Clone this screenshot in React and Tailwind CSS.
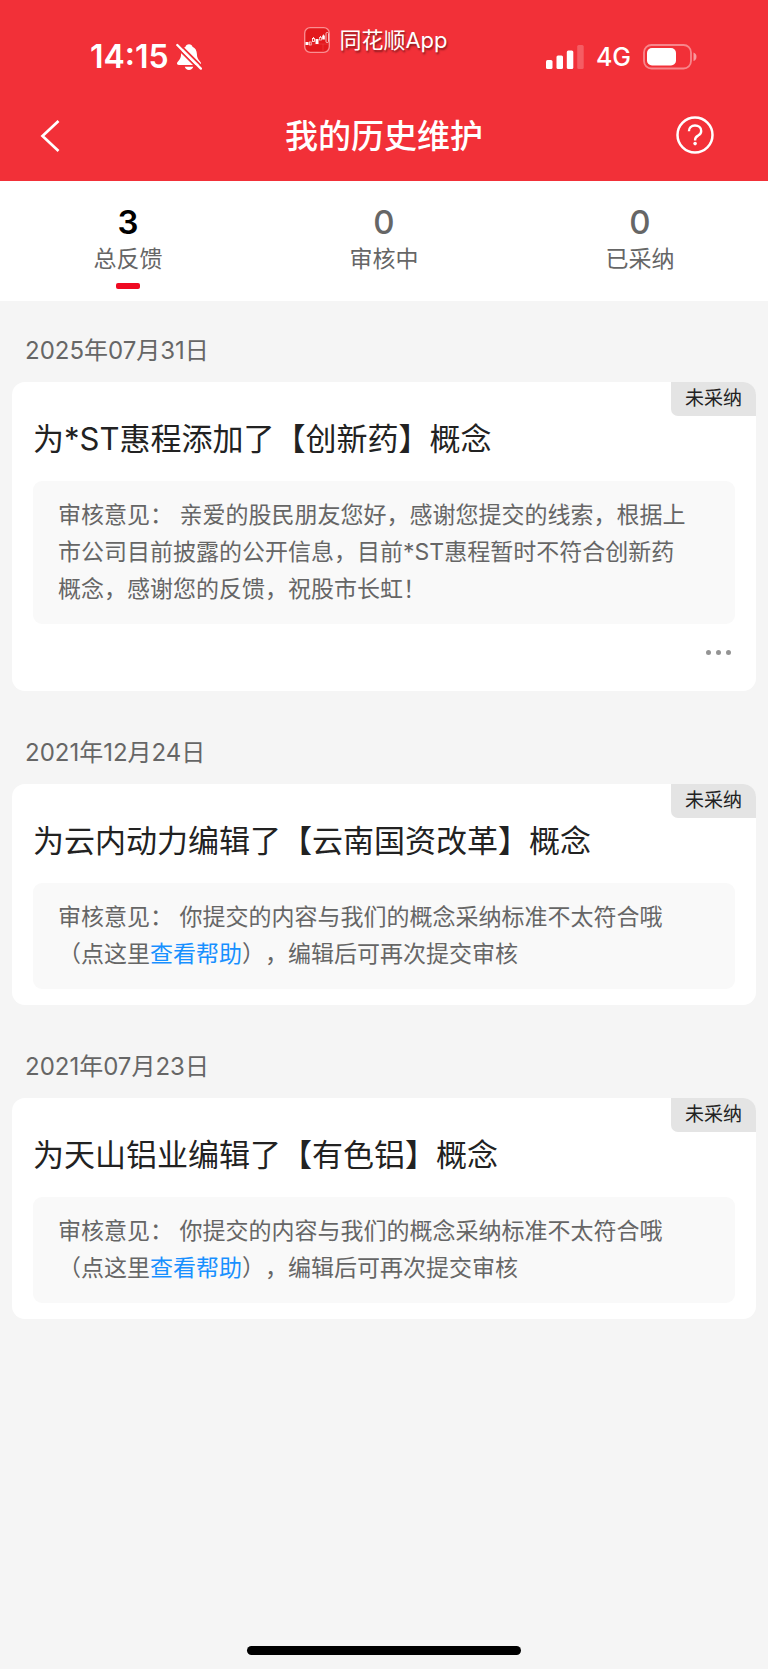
import React from "react";

const tabs = [
  { count: 3, label: "总反馈", active: true },
  { count: 0, label: "审核中", active: false },
  { count: 0, label: "已采纳", active: false },
];

const helpReply = (
  <>
    审核意见： 你提交的内容与我们的概念采纳标准不太符合哦
    <span className="block">
      （点这里
      <a href="#help" className="text-[#1890ff]">查看帮助</a>
      ），编辑后可再次提交审核
    </span>
  </>
);

const records = [
  {
    date: "2025年07月31日",
    title: "为*ST惠程添加了【创新药】概念",
    reply:
      "审核意见： 亲爱的股民朋友您好，感谢您提交的线索，根据上市公司目前披露的公开信息，目前*ST惠程暂时不符合创新药概念，感谢您的反馈，祝股市长虹！",
    more: true,
  },
  { date: "2021年12月24日", title: "为云内动力编辑了【云南国资改革】概念", reply: helpReply },
  { date: "2021年07月23日", title: "为天山铝业编辑了【有色铝】概念", reply: helpReply },
];

function BellOff() {
  return (
    <svg width="26" height="28" viewBox="0 0 26 28" fill="none" aria-hidden="true">
      <path
        d="M13 1.2c-1.900 0-3.200 1.100-3.500 2.500C6.600 4.900 5.200 7.600 5.100 11c-.1 3.600-.9 5.100-2.700 6.900-.9.900-1.400 1.700-1.400 2.400 0 1 .7 1.600 1.900 1.600h20.200c1.200 0 1.900-.6 1.900-1.600 0-.7-.5-1.500-1.400-2.400-1.800-1.800-2.600-3.300-2.700-6.900-.1-3.400-1.500-6.100-4.400-7.300C16.200 2.300 14.900 1.200 13 1.200Z"
        fill="#fff"
      />
      <path d="M8.800 23.700h8.400c-.4 1.900-2 3.200-4.200 3.200s-3.800-1.300-4.200-3.200Z" fill="#fff" />
      <path d="M-.2 3.500 23.400 27.100M2.800 .5 26.400 24.100" stroke="#f23038" strokeWidth="1.900" />
      <path d="M1.300 2 24.900 25.600" stroke="#fff" strokeWidth="2.300" strokeLinecap="round" />
    </svg>
  );
}

function AppLogo() {
  return (
    <svg width="26" height="26" viewBox="0 0 26 26" fill="none" aria-hidden="true">
      <rect x=".7" y=".7" width="24.600" height="24.600" rx="5.500" fill="#e3191d" stroke="#fa8f92" strokeWidth="1.300" />
      <path d="M2 17h22M19 17v7" stroke="#ee4a4c" strokeWidth=".5" />
      <rect x="1.500" y="15" width="3" height="3" fill="#fff" />
      <rect x="5.400" y="15" width="1.800" height="3" stroke="#fbd0d0" strokeWidth=".8" />
      <path d="M9.500 10v1.500M16.500 9v1.500M19.500 7.500V9" stroke="#fff" strokeWidth=".8" />
      <rect x="8.500" y="11.500" width="2" height="3" stroke="#fff" strokeWidth=".8" />
      <rect x="11.500" y="12" width="3" height="5" fill="#fff" />
      <rect x="15.500" y="10.500" width="2" height="2.500" stroke="#fbd0d0" strokeWidth=".8" />
      <rect x="18.200" y="8.500" width="2.600" height="4" fill="#fff" />
      <rect x="22" y="5.500" width="2.500" height="10" rx="1" stroke="#fbd0d0" strokeWidth=".9" />
    </svg>
  );
}

function Signal() {
  return (
    <svg width="38" height="24" viewBox="0 0 38 24" fill="#fff" aria-hidden="true">
      <rect x="0" y="15" width="6.500" height="9" rx="1.500" />
      <rect x="10.500" y="10.500" width="6.500" height="13.500" rx="1.500" />
      <rect x="20.800" y="5.500" width="6.500" height="18.500" rx="1.500" />
      <rect x="31.200" y="0" width="6.500" height="24" rx="1.500" opacity=".22" />
    </svg>
  );
}

function Battery() {
  return (
    <svg width="54" height="26" viewBox="0 0 54 26" fill="none" aria-hidden="true">
      <rect x="1" y="1" width="47" height="23.500" rx="7.500" stroke="#fff" strokeWidth="1.800" opacity=".42" />
      <rect x="4" y="4" width="29" height="17.500" rx="5" fill="#fff" />
      <path d="M50.500 8.500c1.900.6 3 2.200 3 4.300s-1.100 3.700-3 4.300Z" fill="#fff" opacity=".5" />
    </svg>
  );
}

function Record({ item }) {
  return (
    <section>
      <h2 className="pl-[13px] pb-[14px] text-[24px] leading-[34px] text-[#666]">{item.date}</h2>
      <article className="relative rounded-[13px] bg-white px-[21px] pt-[35px] pb-4">
        <span className="absolute top-0 right-0 rounded-tr-[13px] rounded-bl-[7px] bg-[#e4e4e4] px-[14px] text-[19px] leading-[34px] text-[#222]">
          未采纳
        </span>
        <h3 className="text-[31px] leading-[44px] text-[#222]">{item.title}</h3>
        <p className="mt-5 rounded-[9px] bg-[#f9f9f9] py-4 pr-11 pl-[25px] text-[23px] leading-[37px] text-[#666]">
          {item.reply}
        </p>
        {item.more && (
          <div className="flex justify-end pt-4 pb-[11px]">
            <button type="button" aria-label="更多" className="flex h-6 items-center gap-[5px] px-1">
              <i className="size-[5px] rounded-full bg-[#949494]" />
              <i className="size-[5px] rounded-full bg-[#949494]" />
              <i className="size-[5px] rounded-full bg-[#949494]" />
            </button>
          </div>
        )}
      </article>
    </section>
  );
}

export default function App() {
  return (
    <div className="flex min-h-screen flex-col bg-[#f5f5f5] font-['Inter','Noto_Sans_CJK_SC',sans-serif] [text-spacing-trim:space-all]">
      <header className="bg-[#f23038] text-white">
        <div className="grid h-[91px] grid-cols-[1fr_auto_1fr] items-start">
          <div className="flex items-center gap-[7px] pt-[39px] pl-[90px]">
            <span className="text-[32px] leading-9 font-semibold">14:15</span>
            <BellOff />
          </div>
          <div className="flex items-center gap-[9px] pt-6 pr-4">
            <AppLogo />
            <span className="text-[22px] leading-8 [text-shadow:1px_2px_2px_rgba(0,0,0,0.45)]">同花顺App</span>
          </div>
          <div className="flex items-center justify-end gap-3 pt-[39px] pr-[71px]">
            <Signal />
            <span className="text-[25px] leading-9 font-medium">4G</span>
            <Battery />
          </div>
        </div>
        <div className="flex h-[90px] items-center justify-between pr-[54px] pl-[38px]">
          <button type="button" aria-label="返回" className="flex w-[58px] justify-start">
            <svg width="24" height="34" viewBox="0 0 24 34" fill="none" aria-hidden="true">
              <path d="M20.500 2 4.500 17l16 15" stroke="#fff" strokeWidth="2.700" />
            </svg>
          </button>
          <h1 className="text-[33px] leading-[48px] font-medium">我的历史维护</h1>
          <button type="button" aria-label="帮助" className="flex w-[42px] justify-end pb-[2px]">
            <svg width="38" height="38" viewBox="0 0 38 38" fill="none" aria-hidden="true">
              <circle cx="19" cy="19" r="17.500" stroke="#fff" strokeWidth="2.500" />
              <path
                d="M12.900 15.200c0-3.400 2.500-5.700 6.100-5.700s6.200 2.200 6.200 5.400c0 2.200-1.200 3.500-3.100 4.700-2.100 1.200-3 2.100-3 4.200v.6"
                stroke="#fff"
                strokeWidth="2.400"
              />
              <circle cx="19.100" cy="27.600" r="1.800" fill="#fff" />
            </svg>
          </button>
        </div>
      </header>

      <nav className="grid grid-cols-3 bg-white">
        {tabs.map((t) => (
          <button key={t.label} type="button" className="flex flex-col items-center pt-[22px] pb-3">
            <span
              className={
                t.active
                  ? "text-[33px] leading-[38px] font-semibold text-black"
                  : "text-[33px] leading-[38px] font-medium text-[#666]"
              }
            >
              {t.count}
            </span>
            <span className="text-[23px] leading-9 text-[#666]">{t.label}</span>
            <span className={t.active ? "mt-[6px] h-[6px] w-6 rounded-[2px] bg-[#ef0a22]" : "mt-[6px] h-[6px] w-6"} />
          </button>
        ))}
      </nav>

      <main className="flex flex-col gap-[45px] px-3 pt-[33px] pb-12">
        {records.map((r) => (
          <Record key={r.date} item={r} />
        ))}
      </main>

      <div className="mx-auto mt-auto mb-[14px] h-[9px] w-[274px] rounded-full bg-black" />
    </div>
  );
}
